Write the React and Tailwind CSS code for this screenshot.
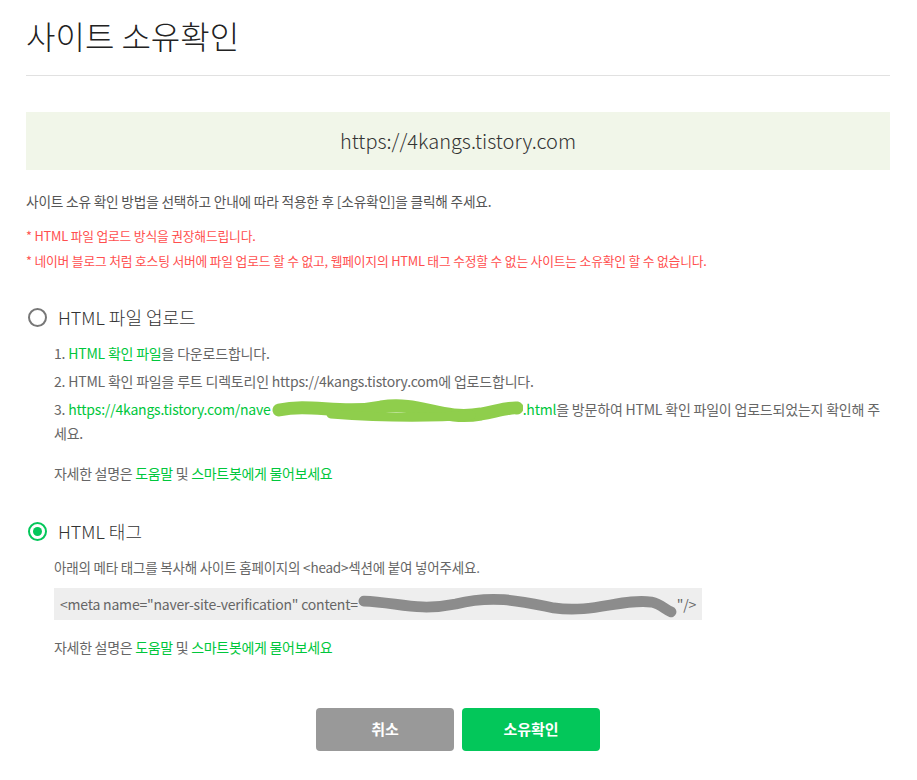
import React from 'react';

const GREEN = 'text-[#00c73c]';

function Radio({ checked }) {
  return (
    <span
      className={`w-[19px] h-[19px] rounded-full border-2 flex items-center justify-center shrink-0 ${
        checked ? 'border-[#03c75a]' : 'border-[#777]'
      }`}
    >
      {checked && <span className="w-[9px] h-[9px] rounded-full bg-[#03c75a]" />}
    </span>
  );
}

// redaction scribbles drawn over hidden values
function GreenScribble() {
  return (
    <svg width="252" height="28" viewBox="0 0 252 28" className="inline-block align-middle -my-3">
      <path
        d="M8 13 C 40 6, 70 18, 110 10 C 150 4, 170 24, 210 17 C 230 13, 240 10, 246 11"
        stroke="#8fce4c"
        strokeWidth="13"
        strokeLinecap="round"
        fill="none"
      />
      <path d="M60 17 C 100 20, 150 22, 200 18" stroke="#8fce4c" strokeWidth="9" strokeLinecap="round" fill="none" />
    </svg>
  );
}

function GrayScribble() {
  return (
    <svg width="326" height="28" viewBox="0 0 326 28" className="inline-block align-middle -my-3">
      <path
        d="M6 11 C 40 12, 60 22, 100 14 C 140 4, 170 12, 200 18 C 240 24, 270 8, 300 12 C 310 14, 314 20, 320 22"
        stroke="#8c8c8c"
        strokeWidth="11"
        strokeLinecap="round"
        fill="none"
      />
    </svg>
  );
}

function Help() {
  return (
    <p className="text-[14px] leading-[24px] text-[#666] tracking-[-0.3px]">
      자세한 설명은 <span className={GREEN}>도움말</span> 및{' '}
      <span className={GREEN}>스마트봇에게 물어보세요</span>
    </p>
  );
}

export default function App() {
  return (
    <div className="w-full min-h-screen bg-white px-[26px] pr-[27px] font-['Noto_Sans_CJK_KR',sans-serif]">
      <h1 className="pt-[15px] pb-[20px] border-b border-[#e1e1e1] text-[32px] leading-[40px] font-light text-[#222]">
        사이트 소유확인
      </h1>

      <div className="mt-[36px] h-[58px] bg-[#f1f6e9] flex items-center justify-center text-[20px] font-light text-[#333]">
        https://4kangs.tistory.com
      </div>

      <p className="mt-[21px] text-[13.7px] leading-[20px] text-[#555] tracking-[-0.2px]">
        사이트 소유 확인 방법을 선택하고 안내에 따라 적용한 후 [소유확인]을 클릭해 주세요.
      </p>
      <div className="mt-[15px] flex flex-col gap-[5px] text-[12.8px] leading-[20px] text-[#ff4f4f] tracking-[-0.2px]">
        <p>* HTML 파일 업로드 방식을 권장해드립니다.</p>
        <p>* 네이버 블로그 처럼 호스팅 서버에 파일 업로드 할 수 없고, 웹페이지의 HTML 태그 수정할 수 없는 사이트는 소유확인 할 수 없습니다.</p>
      </div>

      {/* HTML 파일 업로드 */}
      <label className="mt-[34px] flex items-center gap-[11px] pl-[2px] h-[24px] text-[18px] font-light text-[#333]">
        <Radio />
        HTML 파일 업로드
      </label>
      <div className="pl-[28px]">
        <ol className="mt-[12px] flex flex-col gap-[4px] text-[14px] leading-[24px] text-[#666] tracking-[-0.2px]">
          <li>
            1. <span className={GREEN}>HTML 확인 파일</span>을 다운로드합니다.
          </li>
          <li>2. HTML 확인 파일을 루트 디렉토리인 https://4kangs.tistory.com에 업로드합니다.</li>
          <li>
            3. <span className={GREEN}>https://4kangs.tistory.com/nave<GreenScribble />.html</span>을 방문하여 HTML 확인 파일이
            업로드되었는지 확인해 주세요.
          </li>
        </ol>
        <div className="mt-[16px]">
          <Help />
        </div>
      </div>

      {/* HTML 태그 */}
      <label className="mt-[34px] flex items-center gap-[11px] pl-[2px] h-[24px] text-[18px] font-light text-[#333]">
        <Radio checked />
        HTML 태그
      </label>
      <div className="pl-[28px]">
        <p className="mt-[12px] text-[13.5px] leading-[24px] text-[#666] tracking-[-0.2px]">
          아래의 메타 태그를 복사해 사이트 홈페이지의 &lt;head&gt;섹션에 붙여 넣어주세요.
        </p>
        <div className="mt-[9px] w-[648px] h-[32px] bg-[#eeeeee] flex items-center px-[6px] text-[14px] text-[#666] tracking-[-0.2px] whitespace-nowrap overflow-hidden">
          &lt;meta name="naver-site-verification" content=<GrayScribble />"/&gt;
        </div>
        <div className="mt-[15px]">
          <Help />
        </div>
      </div>

      <div className="mt-[49px] flex justify-center gap-[8px] pb-[29px]">
        <button className="w-[138px] h-[43px] rounded-[4px] bg-[#999] text-white text-[15px] font-bold">취소</button>
        <button className="w-[138px] h-[43px] rounded-[4px] bg-[#03c75a] text-white text-[15px] font-bold">소유확인</button>
      </div>
    </div>
  );
}
